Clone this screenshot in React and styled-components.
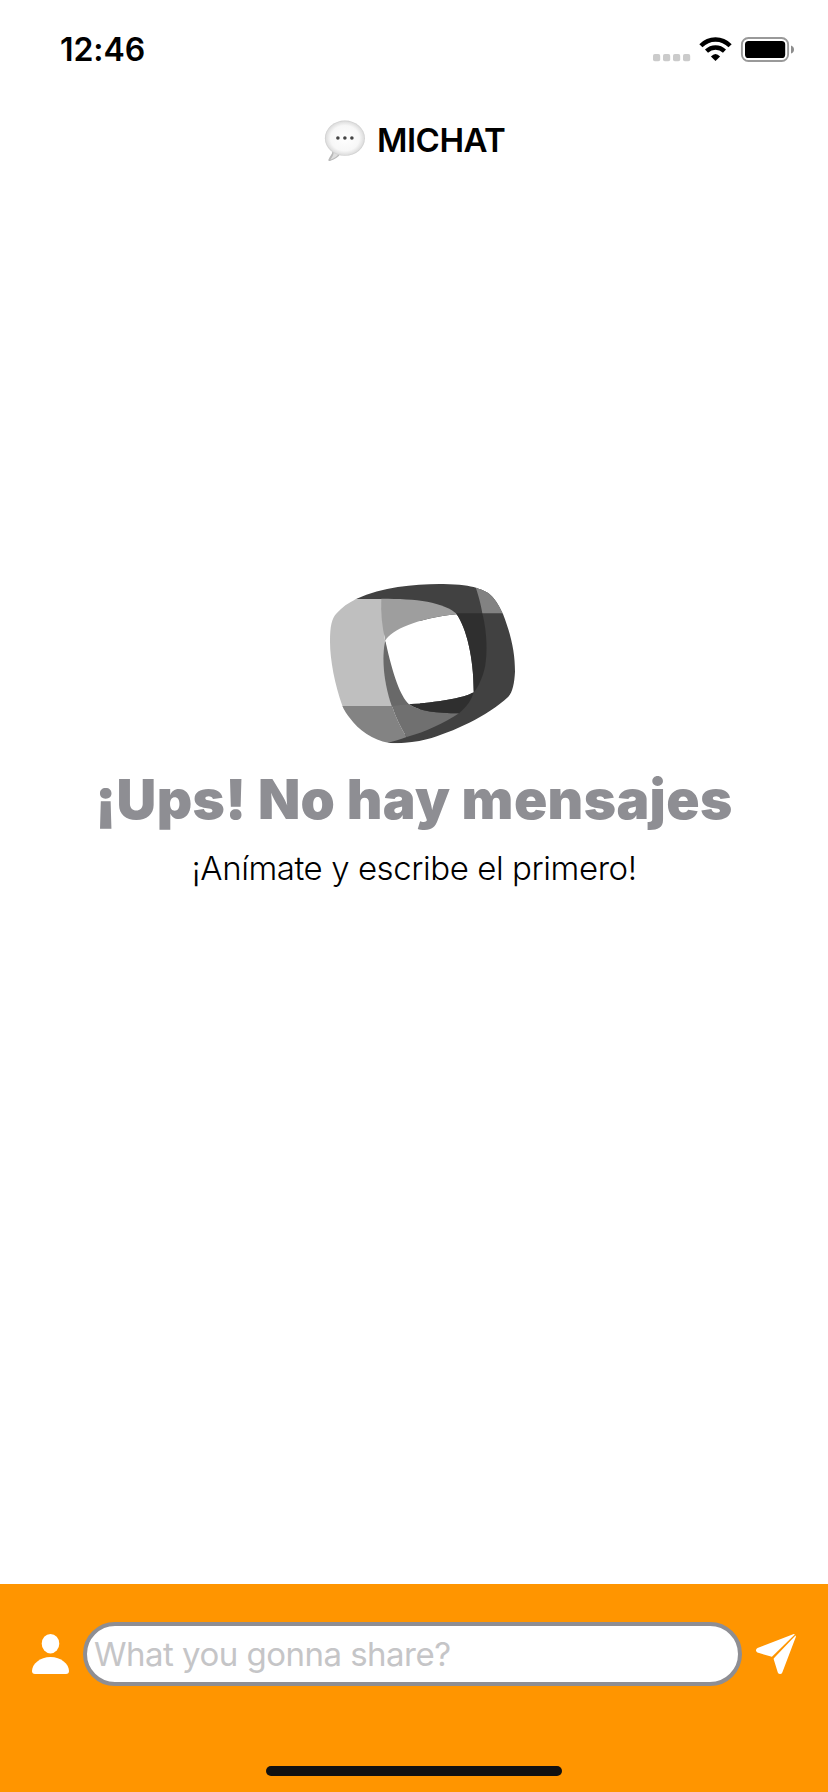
import React from "react";
import styled, { createGlobalStyle } from "styled-components";

const GlobalStyle = createGlobalStyle`
  * { box-sizing: border-box; }
  body { margin: 0; background: #fff; font-family: Inter, "Liberation Sans", sans-serif; }
`;

const Screen = styled.div`
  width: 828px;
  height: 1792px;
  display: flex;
  flex-direction: column;
  background: #fff;
  color: #000;
  overflow: hidden;
`;

const StatusBar = styled.header`
  display: flex;
  align-items: center;
  justify-content: space-between;
  height: 100px;
  padding: 0 34px 0 60px;
`;

const Time = styled.time`
  font-size: 32px;
  line-height: 40px;
  font-weight: 600;
  letter-spacing: -0.05px;
`;

const Indicators = styled.div`
  display: flex;
  align-items: center;
`;

const TitleBar = styled.div`
  display: flex;
  align-items: center;
  height: 80px;
  padding-left: 324px;
  gap: 11px;
`;

const Title = styled.h1`
  margin: 0;
  font-size: 33px;
  line-height: 40px;
  font-weight: 600;
  letter-spacing: -0.5px;
`;

const EmptyState = styled.main`
  flex: 1;
  display: flex;
  flex-direction: column;
  align-items: center;
  padding-top: 390px;
`;

const LogoBox = styled.div`
  height: 185px;
  padding-left: 18px;
`;

const Heading = styled.h2`
  margin: 11px 0 0;
  font-size: 55px;
  line-height: 66px;
  font-weight: 900;
  color: #8e8e93;
  white-space: nowrap;
  letter-spacing: 0.38px;
`;

const Hint = styled.p`
  margin: 16px 0 0;
  font-size: 33px;
  line-height: 40px;
  font-weight: 300;
  white-space: nowrap;
  letter-spacing: -0.43px;
`;

const Composer = styled.footer`
  height: 208px;
  display: flex;
  flex-direction: column;
  align-items: center;
  justify-content: space-between;
  padding: 38px 0 16px;
  background: #ff9500;
`;

const ComposerRow = styled.div`
  width: 100%;
  display: flex;
  align-items: center;
  gap: 14px;
  padding: 0 32px;
`;

const MessageInput = styled.input`
  flex: 1;
  min-width: 0;
  height: 64px;
  border: 4px solid #8e8e93;
  border-radius: 32px;
  padding: 0 7px;
  background: #fff;
  font: 400 33px Inter, sans-serif;
  letter-spacing: -0.52px;
  outline: none;
  &::placeholder { color: #c5c5c7; opacity: 1; }
`;

const IconButton = styled.button`
  display: flex;
  padding: 0;
  border: 0;
  background: none;
  color: #fff;
`;

const HomeIndicator = styled.div`
  width: 296px;
  height: 10px;
  border-radius: 5px;
  background: #111;
`;

const StatusIcons = () => (
  <svg width="144" height="32" viewBox="0 0 144 32">
    {[3, 13, 23, 33].map((x) => (
      <rect key={x} x={x} y="20" width="7.2" height="7.2" rx="1.8" fill="#cbcbcb" />
    ))}
    <g fill="none" stroke="#000" strokeWidth="4.4">
      <path d="M50.9 11.8C59.1 3.4 71.9 3.4 80.1 11.8" />
      <path d="M56.5 17.2C61.7 12.3 69.3 12.3 74.5 17.2" />
    </g>
    <path d="M60.9 22.6Q65.5 17.6 70.1 22.6L65.5 27Z" />
    <rect x="91.9" y="4" width="46.2" height="23" rx="6.5" fill="none" stroke="#999" strokeWidth="1.9" />
    <rect x="95" y="7" width="40.2" height="17" rx="3.6" />
    <path d="M141 11.5Q144 12.5 144 15.5T141 19.5Z" fill="#8d8d8d" />
  </svg>
);

const Bubble = () => (
  <svg width="42" height="42" viewBox="0 -1 42 42">
    <defs>
      <radialGradient id="bubbleFill" cx=".5" cy=".5" r=".53">
        <stop offset="0" stopColor="#fff" />
        <stop offset=".68" stopColor="#f7f7f7" />
        <stop offset=".88" stopColor="#e0e0e0" />
        <stop offset="1" stopColor="#b9b9b9" />
      </radialGradient>
    </defs>
    <path fill="#b9b9b9" d="M8 30C9.5 33 6 36 4.5 39.5C4 41 5 41.3 6.5 40.8C11 39.5 14 37 16.5 34Z" />
    <path fill="#dedede" d="M9 29C11 34 8 37 6.3 39.8C10.5 38.5 13.5 36 16.5 32Z" />
    <ellipse cx="20.9" cy="18.2" rx="20" ry="17.6" fill="url(#bubbleFill)" />
    <g fill="#444">
      <circle cx="13.9" cy="18" r="1.8" />
      <circle cx="20.9" cy="18" r="1.8" />
      <circle cx="27.9" cy="18" r="1.8" />
    </g>
  </svg>
);

const outline =
  "M110 86C190 50 290 41 370 42C420 43 450 48 468 53C490 60 505 67 517 80C535 101 543 120 549 132C575 200 585 250 585 305C583 340 578 365 565 380C500 440 400 485 320 508C280 518 240 522 205 518C160 512 115 480 90 445C75 425 70 415 67 407C45 345 30 270 30 215C30 170 35 145 50 130C65 112 85 98 110 86Z";
const hole = "M196 212C215 180 290 145 410 133C440 175 462 270 461 367C430 385 350 397 267 403C240 375 220 320 196 212Z";

const Logo = () => (
  <svg width="206" height="185" viewBox="0 0 618 555">
    <clipPath id="ring">
      <path d={outline + hole} clipRule="evenodd" />
    </clipPath>
    <g clipPath="url(#ring)">
      <path fill="#414141" d="M0 0H618V555H180L205 517L300 470V100L110 88H0Z" />
      <path fill="#bfbfbf" d="M0 87H192V200L196 212L230 410H0Z" />
      <path fill="#9e9e9e" d="M184 86C290 86 370 95 412 133L300 190L196 212C186 170 182 130 184 86Z" />
      <path fill="#696969" d="M196 212L267 350V405L216 410C184 320 188 240 196 212Z" />
      <path fill="#838383" d="M0 408H216C228 445 243 475 260 501C240 509 222 513 205 518L200 555H0Z" />
      <path fill="#707070" d="M216 408L267 403C300 425 350 430 417 430C370 460 320 485 260 501C243 475 228 445 216 408Z" />
      <path fill="#2f2f2f" d="M267 403L300 380L461 367C455 390 440 410 417 430C350 430 300 425 267 403Z" />
      <path fill="#2f2f2f" d="M408 130H487C502 190 502 250 495 290C487 325 475 350 461 367L440 300Z" />
      <path fill="#828282" d="M463 40C475 75 482 100 487 130H570V40Z" />
    </g>
  </svg>
);

const Person = () => (
  <svg width="37" height="40" viewBox="0 0 37 40" fill="currentColor">
    <ellipse cx="18.5" cy="9.7" rx="8.8" ry="9.7" />
    <path d="M3 40C1 40 0 39 0 37C0 30 8 23 18.5 23S37 30 37 37C37 39 36 40 34 40Z" />
  </svg>
);

const Plane = () => (
  <svg width="40" height="40" viewBox="0 0 40 40" fill="currentColor">
    <path d="M37.8 .1Q38.5 0 38.8 .6L16.2 22.4Q15.7 22.8 15 22.6L1.4 18.5Q0 17.8 0 16.2Q0 14.6 1.5 13.9Z" />
    <path d="M39.5 1.4Q40.1 2 39.8 3L26.3 38.4Q25.7 40 24.1 40Q22.5 40 21.8 38.5L17.7 25.2Q17.5 24.5 18.1 23.9Z" />
  </svg>
);

export default function App() {
  return (
    <>
      <GlobalStyle />
      <Screen>
        <StatusBar>
          <Time>12:46</Time>
          <Indicators><StatusIcons /></Indicators>
        </StatusBar>
        <TitleBar>
          <Bubble />
          <Title>MICHAT</Title>
        </TitleBar>
        <EmptyState>
          <LogoBox><Logo /></LogoBox>
          <Heading>¡Ups! No hay mensajes</Heading>
          <Hint>¡Anímate y escribe el primero!</Hint>
        </EmptyState>
        <Composer>
          <ComposerRow>
            <IconButton aria-label="Perfil"><Person /></IconButton>
            <MessageInput placeholder="What you gonna share?" />
            <IconButton aria-label="Enviar"><Plane /></IconButton>
          </ComposerRow>
          <HomeIndicator />
        </Composer>
      </Screen>
    </>
  );
}
